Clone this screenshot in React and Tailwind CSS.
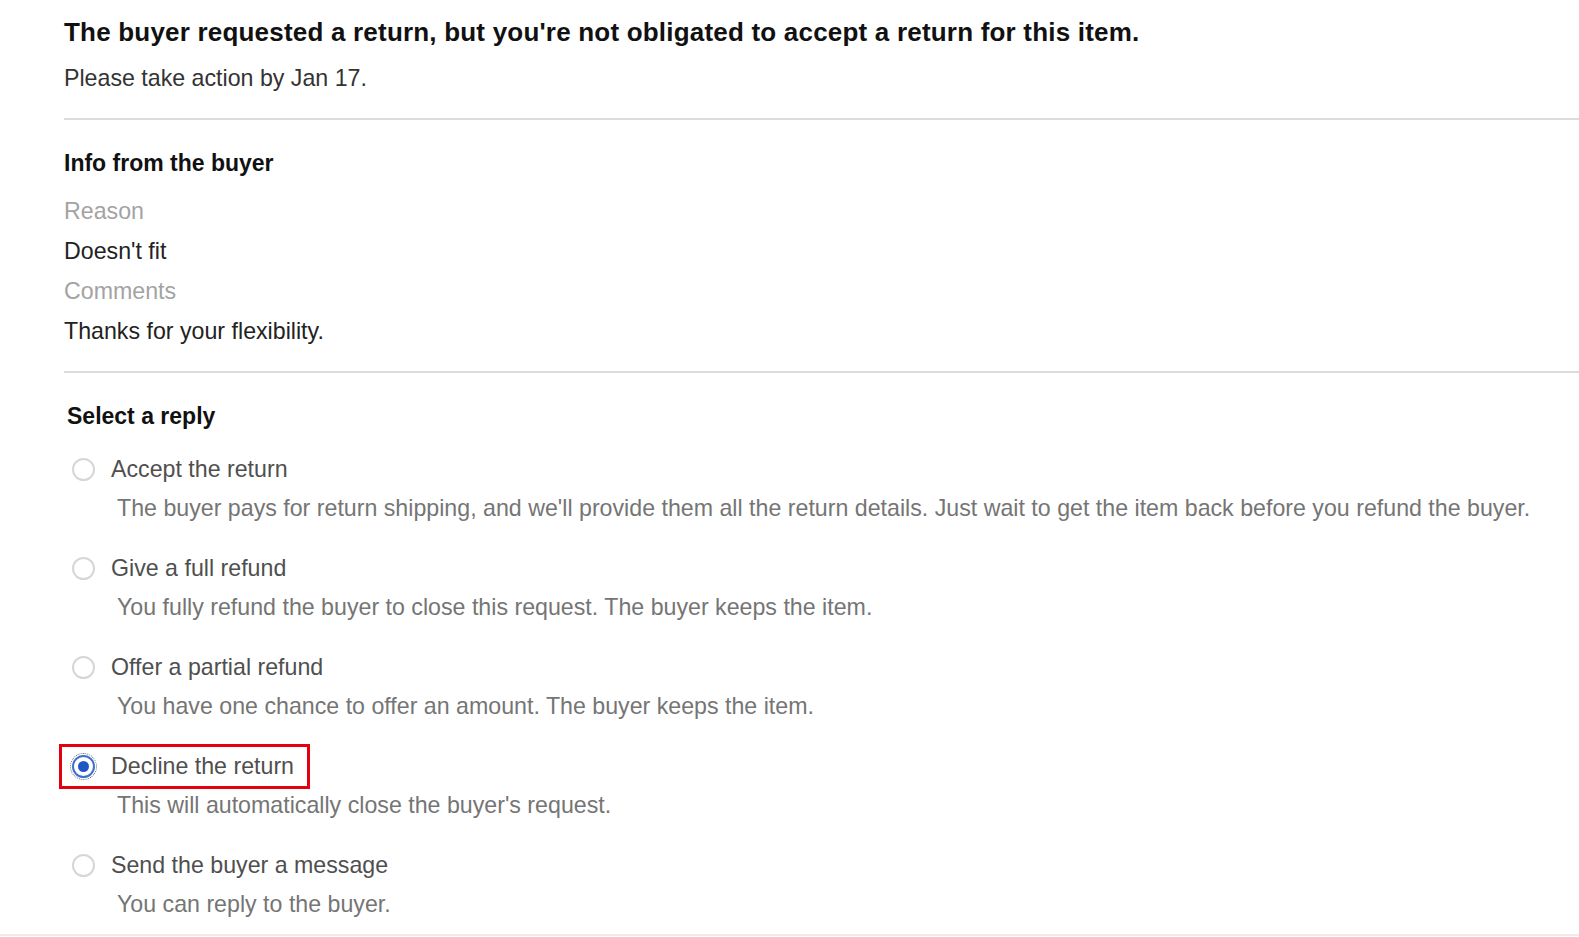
import React, { useState } from "react";

const options = [
  {
    id: "accept",
    label: "Accept the return",
    desc: "The buyer pays for return shipping, and we'll provide them all the return details. Just wait to get the item back before you refund the buyer.",
  },
  {
    id: "full",
    label: "Give a full refund",
    desc: "You fully refund the buyer to close this request. The buyer keeps the item.",
  },
  {
    id: "partial",
    label: "Offer a partial refund",
    desc: "You have one chance to offer an amount. The buyer keeps the item.",
  },
  {
    id: "decline",
    label: "Decline the return",
    desc: "This will automatically close the buyer's request.",
  },
  {
    id: "message",
    label: "Send the buyer a message",
    desc: "You can reply to the buyer.",
  },
];

function Radio({ checked }) {
  if (checked) {
    return (
      <span className="flex h-[23px] w-[23px] shrink-0 items-center justify-center rounded-full border-2 border-[#3f6fd1] bg-white outline-1 outline-offset-[1px] outline-dotted outline-[#6b6b6b]">
        <span className="h-[11px] w-[11px] rounded-full bg-[#1c57c4]" />
      </span>
    );
  }
  return <span className="h-[23px] w-[23px] shrink-0 rounded-full border-2 border-[#d6d6d6] bg-white" />;
}

export default function App() {
  const [selected, setSelected] = useState("decline");

  return (
    <div className="min-h-screen w-full bg-white font-['Liberation_Sans',Arial,sans-serif] text-[23.2px]">
      <div className="pl-16">
        <h1 className="mt-[14px] h-[36px] font-bold leading-[36px] tracking-[0.2px] text-[26px] text-[#111]">
          The buyer requested a return, but you're not obligated to accept a return for this item.
        </h1>
        <p className="mt-[10px] h-[36px] leading-[36px] text-[#333]">Please take action by Jan 17.</p>

        <div className="mt-[22px] border-t-2 border-[#dcdcdc]" />

        <h2 className="mt-[25px] h-[36px] font-bold leading-[36px] text-[23px] text-[#111]">Info from the buyer</h2>
        <div className="mt-[10px]">
          <div className="h-[40px] leading-[40px] text-[#a3a3a3]">Reason</div>
          <div className="h-[40px] leading-[40px] text-[#222]">Doesn't fit</div>
          <div className="h-[40px] leading-[40px] text-[#a3a3a3]">Comments</div>
          <div className="h-[40px] leading-[40px] text-[#222]">Thanks for your flexibility.</div>
        </div>

        <div className="mt-[20px] border-t-2 border-[#dcdcdc]" />

        <h2 className="ml-[3px] mt-[25px] h-[36px] font-bold leading-[36px] text-[23px] text-[#111]">Select a reply</h2>

        <div className="mt-[15px] flex flex-col">
          {options.map((o) => (
            <div key={o.id} className="mb-[21px] ml-2">
              <label
                onClick={() => setSelected(o.id)}
                className="relative flex h-[40px] cursor-pointer items-center gap-4"
              >
                <Radio checked={selected === o.id} />
                <span className="leading-[40px] text-[#4f4f4f]">{o.label}</span>
                {o.id === "decline" && (
                  <span className="pointer-events-none absolute -left-[13px] -top-[2px] -bottom-[3px] w-[251px] border-[3px] border-[#e3000f]" />
                )}
              </label>
              <p className="ml-[45px] h-[38px] leading-[38px] text-[#757575]">{o.desc}</p>
            </div>
          ))}
        </div>
      </div>
      <div className="absolute left-0 top-[934px] w-full border-t-2 border-[#ebebeb]" />
    </div>
  );
}
